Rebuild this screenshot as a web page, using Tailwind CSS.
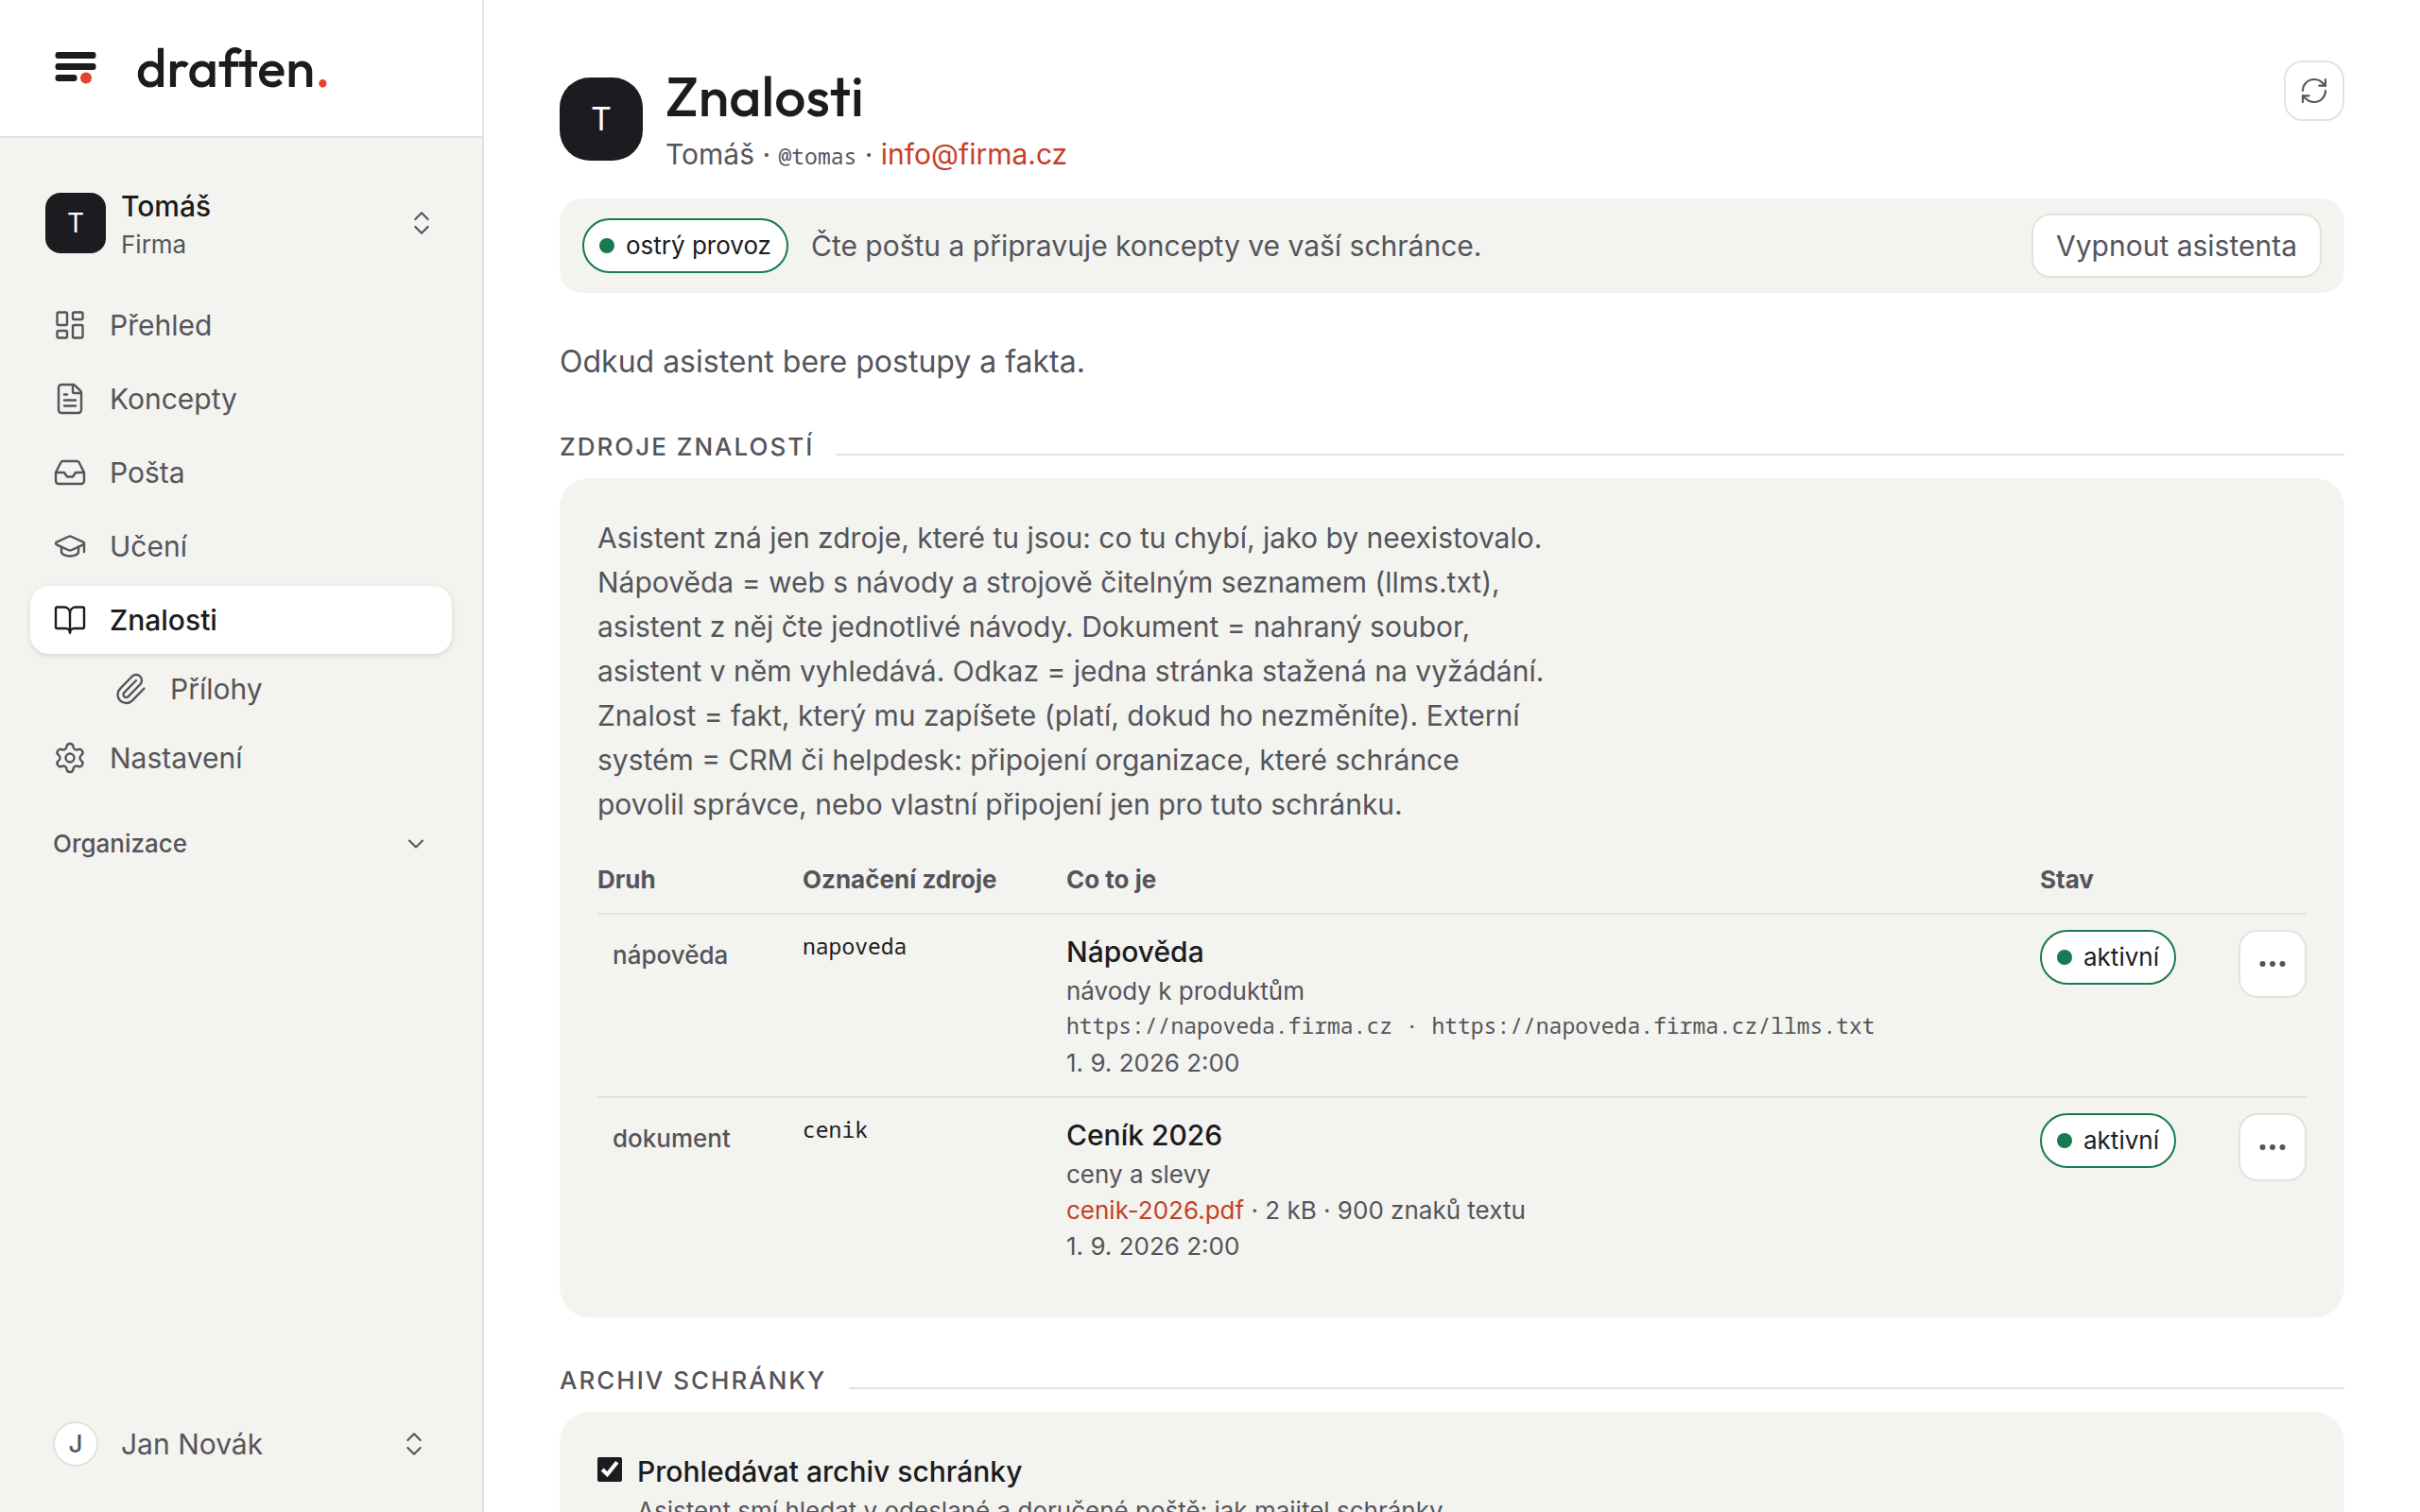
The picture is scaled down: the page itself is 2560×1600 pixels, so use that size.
<!DOCTYPE html>
<html lang="cs">
<head>
    <meta charset="UTF-8">
    <meta name="viewport" content="width=device-width, initial-scale=1.0">
    <title>Znalosti · draften.</title>
    <script src="https://cdn.jsdelivr.net/npm/@tailwindcss/browser@4"></script>
</head>
<body class="flex h-screen overflow-hidden bg-white font-[Inter,sans-serif] text-[30px] leading-[46px] text-[#55545b]">

    <!-- Sidebar -->
    <aside class="flex w-[512px] shrink-0 flex-col border-r-2 border-[#e3e3de] bg-[#f3f3ef]">
        <a href="#" class="flex h-[146px] shrink-0 items-center gap-[42px] border-b-2 border-[#e3e3de] bg-white pl-[58px] text-[#1c1b20]">
            <svg class="h-9 w-11 shrink-0" viewBox="0 0 44 36" fill="currentColor" aria-hidden="true">
                <rect x="0.500" y="1" width="43" height="7" rx="3"/>
                <rect x="0.500" y="13" width="43" height="7" rx="3"/>
                <rect x="0.500" y="25" width="23" height="7" rx="3"/>
                <circle cx="33" cy="28.500" r="6" fill="#e2452b"/>
            </svg>
            <span class="font-[Outfit,Lato,sans-serif] text-[56px] leading-[64px] font-medium">draften<span class="text-[#e2452b]">.</span></span>
        </a>

        <div class="flex min-h-0 flex-1 flex-col px-8 pt-[46px] pb-9">
            <button type="button" class="flex h-[88px] w-full items-center gap-4 px-4 text-left">
                <span class="flex size-16 shrink-0 items-center justify-center rounded-2xl bg-[#1c1b20] text-[28px] text-white">T</span>
                <span class="flex flex-1 flex-col pt-1">
                    <span class="leading-[42px] font-medium text-[#1c1b20]">Tomáš</span>
                    <span class="text-[26px] leading-[40px]">Firma</span>
                </span>
                <svg class="size-8" viewBox="0 0 24 24" fill="none" stroke="currentColor" stroke-width="1.600" stroke-linecap="round" stroke-linejoin="round" aria-hidden="true"><path d="m7 15 5 5 5-5"/><path d="m7 9 5-5 5 5"/></svg>
            </button>

            <nav class="mt-7 flex flex-col gap-1.5">
                <a href="#" class="flex h-[72px] items-center gap-6 rounded-[20px] px-6">
                    <svg class="size-9" viewBox="0 0 24 24" fill="none" stroke="currentColor" stroke-width="1.600" stroke-linecap="round" stroke-linejoin="round" aria-hidden="true"><rect width="7" height="9" x="3" y="3" rx="1"/><rect width="7" height="5" x="14" y="3" rx="1"/><rect width="7" height="9" x="14" y="12" rx="1"/><rect width="7" height="5" x="3" y="16" rx="1"/></svg>
                    Přehled
                </a>
                <a href="#" class="flex h-[72px] items-center gap-6 rounded-[20px] px-6">
                    <svg class="size-9" viewBox="0 0 24 24" fill="none" stroke="currentColor" stroke-width="1.600" stroke-linecap="round" stroke-linejoin="round" aria-hidden="true"><path d="M6 22a2 2 0 0 1-2-2V4a2 2 0 0 1 2-2h8a2.400 2.400 0 0 1 1.704.706l3.588 3.588A2.400 2.400 0 0 1 20 8v12a2 2 0 0 1-2 2z"/><path d="M14 2v5a1 1 0 0 0 1 1h5"/><path d="M10 9H8"/><path d="M16 13H8"/><path d="M16 17H8"/></svg>
                    Koncepty
                </a>
                <a href="#" class="flex h-[72px] items-center gap-6 rounded-[20px] px-6">
                    <svg class="size-9" viewBox="0 0 24 24" fill="none" stroke="currentColor" stroke-width="1.600" stroke-linecap="round" stroke-linejoin="round" aria-hidden="true"><path d="M22 12h-6l-2 3h-4l-2-3H2"/><path d="M5.450 5.110 2 12v6a2 2 0 0 0 2 2h16a2 2 0 0 0 2-2v-6l-3.450-6.890A2 2 0 0 0 16.760 4H7.240a2 2 0 0 0-1.790 1.110z"/></svg>
                    Pošta
                </a>
                <a href="#" class="flex h-[72px] items-center gap-6 rounded-[20px] px-6">
                    <svg class="size-9" viewBox="0 0 24 24" fill="none" stroke="currentColor" stroke-width="1.600" stroke-linecap="round" stroke-linejoin="round" aria-hidden="true"><path d="M21.420 10.922a1 1 0 0 0-.019-1.838L12.830 5.180a2 2 0 0 0-1.660 0L2.600 9.080a1 1 0 0 0 0 1.832l8.570 3.908a2 2 0 0 0 1.660 0z"/><path d="M22 10v6"/><path d="M6 12.500V16a6 3 0 0 0 12 0v-3.500"/></svg>
                    Učení
                </a>
                <a href="#" aria-current="page" class="flex h-[72px] items-center gap-6 rounded-[20px] bg-white px-6 font-medium text-[#1c1b20] shadow-[0_2px_6px_rgba(0,0,0,0.12)]">
                    <svg class="size-9" viewBox="0 0 24 24" fill="none" stroke="currentColor" stroke-width="1.600" stroke-linecap="round" stroke-linejoin="round" aria-hidden="true"><path d="M12 7v14"/><path d="M3 18a1 1 0 0 1-1-1V4a1 1 0 0 1 1-1h5a4 4 0 0 1 4 4 4 4 0 0 1 4-4h5a1 1 0 0 1 1 1v13a1 1 0 0 1-1 1h-6a3 3 0 0 0-3 3 3 3 0 0 0-3-3z"/></svg>
                    Znalosti
                </a>
                <a href="#" class="ml-16 flex h-[62px] items-center gap-6 rounded-[20px] px-6">
                    <svg class="size-9" viewBox="0 0 24 24" fill="none" stroke="currentColor" stroke-width="1.600" stroke-linecap="round" stroke-linejoin="round" aria-hidden="true"><path d="m16 6-8.414 8.586a2 2 0 0 0 2.829 2.829l8.414-8.586a4 4 0 1 0-5.657-5.657l-8.379 8.551a6 6 0 1 0 8.485 8.485l8.379-8.551"/></svg>
                    Přílohy
                </a>
                <a href="#" class="flex h-[72px] items-center gap-6 rounded-[20px] px-6">
                    <svg class="size-9" viewBox="0 0 24 24" fill="none" stroke="currentColor" stroke-width="1.600" stroke-linecap="round" stroke-linejoin="round" aria-hidden="true"><path d="M9.671 4.136a2.340 2.340 0 0 1 4.659 0 2.340 2.340 0 0 0 3.319 1.915 2.340 2.340 0 0 1 2.330 4.033 2.340 2.340 0 0 0 0 3.831 2.340 2.340 0 0 1-2.330 4.033 2.340 2.340 0 0 0-3.319 1.915 2.340 2.340 0 0 1-4.659 0 2.340 2.340 0 0 0-3.320-1.915 2.340 2.340 0 0 1-2.330-4.033 2.340 2.340 0 0 0 0-3.831A2.340 2.340 0 0 1 6.350 6.051a2.340 2.340 0 0 0 3.319-1.915"/><circle cx="12" cy="12" r="3"/></svg>
                    Nastavení
                </a>
            </nav>

            <button type="button" class="mt-7 flex h-[54px] items-center justify-between px-6 text-[26px] font-medium">
                Organizace
                <svg class="size-7" viewBox="0 0 24 24" fill="none" stroke="currentColor" stroke-width="1.800" stroke-linecap="round" stroke-linejoin="round" aria-hidden="true"><path d="m6 9 6 6 6-6"/></svg>
            </button>

            <button type="button" class="mt-auto flex h-[72px] items-center gap-6 px-6 text-left">
                <span class="flex size-12 shrink-0 items-center justify-center rounded-full border-2 border-[#e3e3de] bg-white text-[26px] font-medium">J</span>
                <span class="flex-1">Jan Novák</span>
                <svg class="size-8" viewBox="0 0 24 24" fill="none" stroke="currentColor" stroke-width="1.600" stroke-linecap="round" stroke-linejoin="round" aria-hidden="true"><path d="m7 15 5 5 5-5"/><path d="m7 9 5-5 5 5"/></svg>
            </button>
        </div>
    </aside>

    <!-- Content -->
    <main class="min-w-0 flex-1 overflow-hidden px-20 pt-16">
        <header class="flex items-start justify-between">
            <div class="flex items-center gap-6">
                <span class="flex size-[88px] shrink-0 items-center justify-center rounded-[32px] bg-[#1c1b20] text-[34px] text-white">T</span>
                <div>
                    <h1 class="font-[Outfit,Lato,sans-serif] text-[59px] leading-[74px] font-medium text-[#1c1b20]">Znalosti</h1>
                    <p class="leading-[50px]">Tomáš · <span class="font-['Noto_Sans_Mono','Liberation_Mono',monospace] text-[23px] leading-none">@tomas</span> · <a href="mailto:info@firma.cz" class="text-[#c53f27]">info@firma.cz</a></p>
                </div>
            </div>
            <button type="button" aria-label="Obnovit" class="flex size-16 items-center justify-center rounded-[20px] border-2 border-[#e3e3de] bg-white">
                <svg class="size-8" viewBox="0 0 24 24" fill="none" stroke="currentColor" stroke-width="1.600" stroke-linecap="round" stroke-linejoin="round" aria-hidden="true"><path d="M3 12a9 9 0 0 1 9-9 9.750 9.750 0 0 1 6.740 2.740L21 8"/><path d="M21 3v5h-5"/><path d="M21 12a9 9 0 0 1-9 9 9.750 9.750 0 0 1-6.740-2.740L3 16"/><path d="M8 16H3v5"/></svg>
            </button>
        </header>

        <div class="mt-[22px] flex h-[100px] items-center rounded-3xl bg-[#f3f3ef] px-6">
            <span class="flex h-[58px] items-center gap-3 rounded-full border-2 border-[#187a50] bg-white px-4 text-[26px] text-[#1c1b20]"><span class="size-4 rounded-full bg-[#187a50]"></span>ostrý provoz</span>
            <p class="ml-6 flex-1">Čte poštu a připravuje koncepty ve vaší schránce.</p>
            <button type="button" class="h-[68px] rounded-[20px] border-2 border-[#e3e3de] bg-white px-6">Vypnout asistenta</button>
        </div>

        <p class="mt-12 text-[32px] leading-[50px]">Odkud asistent bere postupy a fakta.</p>

        <section>
            <div class="mt-[45px] flex items-baseline gap-6">
                <h2 class="text-[26px] leading-[40px] font-medium tracking-[2px] uppercase">Zdroje znalostí</h2>
                <div class="h-0.5 flex-1 bg-[#e3e3de]"></div>
            </div>
            <div class="mt-[13px] rounded-[32px] bg-[#f3f3ef] p-10">
                <p class="max-w-[1006px] leading-[47px]">Asistent zná jen zdroje, které tu jsou: co tu chybí, jako by neexistovalo. Nápověda = web s návody a strojově čitelným seznamem (llms.txt), asistent z něj čte jednotlivé návody. Dokument = nahraný soubor, asistent v něm vyhledává. Odkaz = jedna stránka stažená na vyžádání. Znalost = fakt, který mu zapíšete (platí, dokud ho nezměníte). Externí systém = CRM či helpdesk: připojení organizace, které schránce povolil správce, nebo vlastní připojení jen pro tuto schránku.</p>

                <table class="mt-[21px] w-full text-left text-[26px] leading-[38px]">
                    <thead>
                        <tr class="border-b-2 border-[#e3e3de]">
                            <th class="w-[217px] pt-4 pb-4 font-bold">Druh</th>
                            <th class="w-[279px] font-bold">Označení zdroje</th>
                            <th class="font-bold">Co to je</th>
                            <th class="w-[210px] font-bold">Stav</th>
                            <th class="w-[72px]" aria-label="Akce"></th>
                        </tr>
                    </thead>
                    <tbody class="align-top">
                        <tr class="border-b-2 border-[#e3e3de]">
                            <td class="px-4 pt-[24px] font-medium">nápověda</td>
                            <td class="pt-4 font-['Noto_Sans_Mono','Liberation_Mono',monospace] text-[23px] leading-[34px] text-[#1c1b20]">napoveda</td>
                            <td class="py-4">
                                <div class="text-[30px] leading-[46px] font-medium text-[#1c1b20]">Nápověda</div>
                                <div>návody k produktům</div>
                                <div class="pb-1 font-['Noto_Sans_Mono','Liberation_Mono',monospace] text-[23px] leading-[34px]">https://napoveda.firma.cz · https://napoveda.firma.cz/llms.txt</div>
                                <div>1. 9. 2026 2:00</div>
                            </td>
                            <td class="pt-4"><span class="inline-flex h-[58px] items-center gap-3 rounded-full border-2 border-[#187a50] bg-white px-4 text-[#1c1b20]"><span class="size-4 rounded-full bg-[#187a50]"></span>aktivní</span></td>
                            <td class="pt-4">
                                <button type="button" aria-label="Další akce" class="flex size-[72px] items-center justify-center rounded-[20px] border-2 border-[#e3e3de] bg-white">
                                    <svg class="size-9" viewBox="0 0 24 24" fill="currentColor" aria-hidden="true"><circle cx="5" cy="12" r="2"/><circle cx="12" cy="12" r="2"/><circle cx="19" cy="12" r="2"/></svg>
                                </button>
                            </td>
                        </tr>
                        <tr>
                            <td class="px-4 pt-[24px] font-medium">dokument</td>
                            <td class="pt-4 font-['Noto_Sans_Mono','Liberation_Mono',monospace] text-[23px] leading-[34px] text-[#1c1b20]">cenik</td>
                            <td class="py-4">
                                <div class="text-[30px] leading-[46px] font-medium text-[#1c1b20]">Ceník 2026</div>
                                <div>ceny a slevy</div>
                                <div><a href="#" class="text-[#c53f27]">cenik-2026.pdf</a> · 2 kB · 900 znaků textu</div>
                                <div>1. 9. 2026 2:00</div>
                            </td>
                            <td class="pt-4"><span class="inline-flex h-[58px] items-center gap-3 rounded-full border-2 border-[#187a50] bg-white px-4 text-[#1c1b20]"><span class="size-4 rounded-full bg-[#187a50]"></span>aktivní</span></td>
                            <td class="pt-4">
                                <button type="button" aria-label="Další akce" class="flex size-[72px] items-center justify-center rounded-[20px] border-2 border-[#e3e3de] bg-white">
                                    <svg class="size-9" viewBox="0 0 24 24" fill="currentColor" aria-hidden="true"><circle cx="5" cy="12" r="2"/><circle cx="12" cy="12" r="2"/><circle cx="19" cy="12" r="2"/></svg>
                                </button>
                            </td>
                        </tr>
                    </tbody>
                </table>
            </div>
        </section>

        <section>
            <div class="mt-[47px] flex items-baseline gap-6">
                <h2 class="text-[26px] leading-[40px] font-medium tracking-[2px] uppercase">Archiv schránky</h2>
                <div class="h-0.5 flex-1 bg-[#e3e3de]"></div>
            </div>
            <div class="mt-[13px] rounded-[32px] bg-[#f3f3ef] p-10">
                <div class="flex gap-4">
                    <input id="archive" type="checkbox" checked class="mt-2 size-[26px] shrink-0 accent-[#1c1b20]">
                    <div>
                        <label for="archive" class="block font-medium text-[#1c1b20]">Prohledávat archiv schránky</label>
                        <p class="max-w-[900px] text-[26px] leading-[38px]">Asistent smí hledat v odeslané a doručené poště: jak majitel schránky</p>
                    </div>
                </div>
            </div>
        </section>
    </main>
</body>
</html>
